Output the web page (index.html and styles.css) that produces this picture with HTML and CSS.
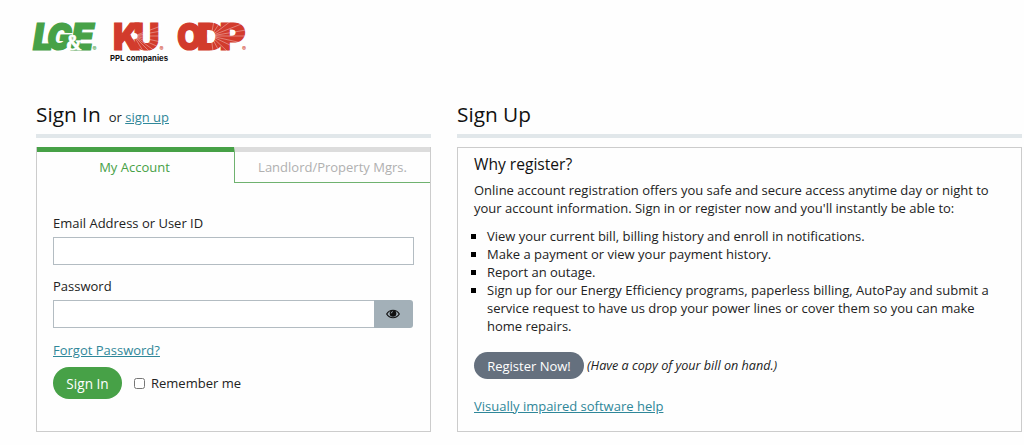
FILE: index.html
```html
<!DOCTYPE html>
<html lang="en">
<head>
  <meta charset="UTF-8">
  <title>Sign In</title>
  <link rel="stylesheet" href="styles.css">
</head>
<body>

  <header class="header">
    <svg class="logo" width="220" height="50" viewBox="30 15 220 50" role="img" aria-label="LG&amp;E KU ODP">
      <!-- LG&E -->
      <g class="logo-green">
        <text x="33" y="50" textLength="20" lengthAdjust="spacingAndGlyphs">L</text>
        <text x="47" y="50" textLength="25" lengthAdjust="spacingAndGlyphs">G</text>
        <text x="71" y="50" textLength="23" lengthAdjust="spacingAndGlyphs">E</text>
      </g>
      <text class="logo-amp" x="66" y="50" textLength="16" lengthAdjust="spacingAndGlyphs">&amp;</text>
      <text class="logo-reg logo-reg-green" x="92.500" y="51">®</text>

      <!-- KU -->
      <g class="logo-red">
        <text x="113" y="50" textLength="27" lengthAdjust="spacingAndGlyphs">K</text>
        <text x="133.500" y="50" textLength="26" lengthAdjust="spacingAndGlyphs">U</text>
      </g>
      <path class="logo-rays" d="M134 36L161 26M134 36L161 31M134 36L161 36M134 36L161 42M134 36L161 48M134 36L155 51M134 36L149 51M134 36L143 51"/>
      <circle class="logo-sun" cx="134.500" cy="36" r="3"/>
      <text class="logo-reg" x="159.500" y="51">®</text>
      <text class="logo-sub" x="110" y="61" textLength="58" lengthAdjust="spacingAndGlyphs">PPL companies</text>

      <!-- ODP -->
      <g class="logo-red">
        <text x="177" y="50" textLength="25" lengthAdjust="spacingAndGlyphs">O</text>
        <text x="197" y="50" textLength="28" lengthAdjust="spacingAndGlyphs">D</text>
        <text x="219.500" y="50" textLength="26" lengthAdjust="spacingAndGlyphs">P</text>
      </g>
      <path class="logo-rays" d="M211 36L214 21M211 36L221 21M211 36L231 21M211 36L244 23M211 36L246 30M211 36L246 36M211 36L242 43M211 36L234 47M211 36L227 51M211 36L219 51M211 36L213 51"/>
      <circle class="logo-sun" cx="211" cy="36" r="3.500"/>
      <text class="logo-reg" x="242" y="51">®</text>
    </svg>
  </header>

  <main class="columns">
    <section>
      <div class="heading">
        <h2>Sign In</h2>
        <span>or <a href="#">sign up</a></span>
      </div>
      <div class="panel">
        <div class="tabs">
          <button type="button" class="tab active">My Account</button>
          <button type="button" class="tab">Landlord/Property Mgrs.</button>
        </div>
        <form class="login">
          <label for="user">Email Address or User ID</label>
          <input type="text" id="user" class="field">
          <label for="password">Password</label>
          <div class="password-group">
            <input type="password" id="password" class="field">
            <button type="button" class="toggle" aria-label="Show password">
              <svg width="14" height="10" viewBox="0 0 14 10">
                <path d="M.7 5C3.600 0 10.400 0 13.300 5C10.400 10 3.600 10 .7 5Z" fill="none" stroke="#111" stroke-width="1.200"/>
                <circle cx="7" cy="4.500" r="3.300" fill="#111"/>
                <path d="M5.200 4.400A1.800 1.800 0 0 1 7 2.600" fill="none" stroke="#a3b0b8" stroke-width=".8"/>
              </svg>
            </button>
          </div>
          <a href="#" class="forgot">Forgot Password?</a>
          <div class="submit-row">
            <button type="button" class="btn btn-green">Sign In</button>
            <input type="checkbox" id="remember">
            <label for="remember">Remember me</label>
          </div>
        </form>
      </div>
    </section>

    <section>
      <div class="heading">
        <h2>Sign Up</h2>
      </div>
      <div class="panel register">
        <h3>Why register?</h3>
        <p>Online account registration offers you safe and secure access anytime day or night to your account information. Sign in or register now and you'll instantly be able to:</p>
        <ul>
          <li>View your current bill, billing history and enroll in notifications.</li>
          <li>Make a payment or view your payment history.</li>
          <li>Report an outage.</li>
          <li>Sign up for our Energy Efficiency programs, paperless billing, AutoPay and submit a service request to have us drop your power lines or cover them so you can make home repairs.</li>
        </ul>
        <div class="register-row">
          <button type="button" class="btn btn-gray">Register Now!</button>
          <em>(Have a copy of your bill on hand.)</em>
        </div>
        <a href="#">Visually impaired software help</a>
      </div>
    </section>
  </main>

</body>
</html>
```
FILE: styles.css
```css
* {
  box-sizing: border-box;
}

body {
  margin: 0;
  padding: 15px 2px 0 36px;
  background: #fefefe;
  color: #222;
  font-family: "Open Sans", sans-serif;
  font-size: 13px;
  line-height: 18px;
}

a {
  color: #2f8799;
}

button,
input {
  font-family: inherit;
}

.header {
  height: 84px;
}

/* logo */
.logo {
  display: block;
  margin-left: -6px;
  font-family: Inter, sans-serif;
}

.logo-green,
.logo-red {
  font-size: 37.5px;
  font-weight: 900;
  stroke-width: 1.2px;
}

.logo-green {
  fill: #47a147;
  stroke: #47a147;
  font-style: italic;
}

.logo-red {
  fill: #d23b2c;
  stroke: #d23b2c;
}

.logo-amp {
  fill: #fff;
  stroke: #fff;
  stroke-width: .7px;
  font-family: "Liberation Serif", serif;
  font-size: 23px;
  font-weight: bold;
}

.logo-rays {
  fill: none;
  stroke: #fff;
  stroke-width: .6px;
  opacity: .6;
}

.logo-sun {
  fill: #fff;
}

.logo-reg {
  fill: #d23b2c;
  font-size: 6px;
  font-weight: bold;
}

.logo-reg-green {
  fill: #47a147;
}

.logo-sub {
  fill: #111;
  font-size: 7.5px;
  font-weight: bold;
}

/* columns */
.columns {
  display: grid;
  grid-template-columns: 395px 565px;
  column-gap: 26px;
}

.heading {
  display: flex;
  align-items: baseline;
  height: 39px;
  margin-bottom: 9px;
  border-bottom: 4px solid #e1e7ea;
}

.heading h2 {
  margin: 0 8px 0 0;
  color: #111;
  font-size: 20.8px;
  font-weight: normal;
  line-height: 30px;
}

.panel {
  height: 285px;
  border: 1px solid #ccc;
}

/* tabs */
.tabs {
  display: flex;
  height: 36px;
  margin-top: -1px;
}

.tab {
  flex: 1;
  padding: 0 2px 0 0;
  border: 0;
  border-top: 5px solid #dcdcdc;
  border-bottom: 1px solid #6fb26f;
  background: none;
  color: #b0b0b0;
  font-size: 13px;
}

.tab + .tab {
  padding-right: 0;
  border-left: 1px solid #6fb26f;
}

.tab.active {
  border-top-color: #47a147;
  border-bottom-color: transparent;
  color: #47a147;
}

/* sign in form */
.login {
  padding: 31px 16px 0;
}

.login > label {
  display: block;
  margin-bottom: 5px;
}

.field {
  display: block;
  width: 361px;
  height: 28px;
  margin-bottom: 12px;
  padding: 0 8px;
  border: 1px solid #b3bcc2;
  background: #fff;
}

.password-group {
  display: flex;
  width: 360px;
  margin-bottom: 13px;
}

.password-group .field {
  flex: 1;
  width: auto;
  margin: 0;
  border-right: 0;
}

.toggle {
  display: flex;
  align-items: center;
  justify-content: center;
  width: 39px;
  padding: 0 1px 0 0;
  border: 0;
  border-radius: 0 3px 3px 0;
  background: #a3b0b8;
}

.forgot {
  display: block;
  width: max-content;
}

.submit-row {
  display: flex;
  align-items: center;
  margin-top: 8px;
}

.submit-row input {
  width: 11px;
  height: 11px;
  margin: 0 6px 0 12px;
}

.btn {
  padding: 0;
  border: 0;
  color: #fff;
}

.btn-green {
  width: 69px;
  height: 32px;
  border-radius: 16px;
  background: #47a147;
  font-size: 13.6px;
}

.btn-gray {
  width: 110px;
  height: 27px;
  border-radius: 14px;
  background: #65707e;
  font-size: 13px;
}

/* register box */
.register {
  padding: 6px 16px 0;
}

.register h3 {
  margin: 0 0 6px;
  color: #111;
  font-size: 15.6px;
  font-weight: normal;
  line-height: 21px;
}

.register p {
  margin: 0 0 10px;
}

.register ul {
  margin: 0 0 17px;
  padding-left: 13px;
  list-style: square;
}

.register li::marker {
  color: #000;
}

.register-row {
  display: flex;
  align-items: center;
  gap: 3px;
  margin-bottom: 18px;
}

.register-row em {
  font-size: 12.6px;
}
```
